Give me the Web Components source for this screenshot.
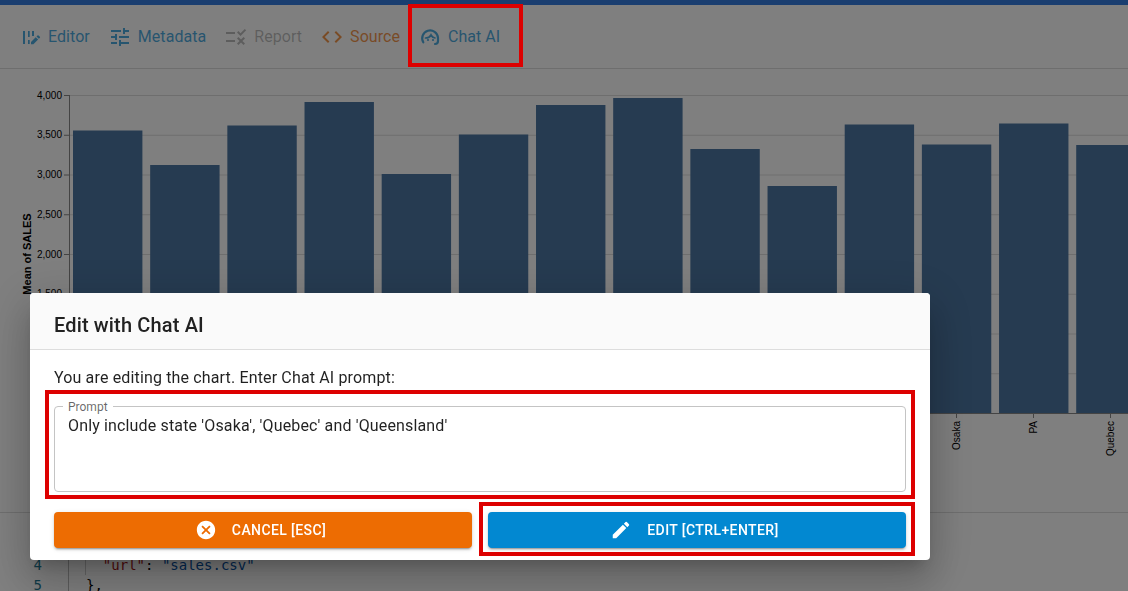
<!DOCTYPE html>
<html lang="en">
<head>
<meta charset="utf-8">
<title>Edit with Chat AI</title>
<style>
  html, body { margin: 0; height: 100%; overflow: hidden; }
  body { font-family: Roboto, "Liberation Sans", sans-serif; background: #fff; }
</style>
</head>
<body>
<mi-app>
  <mi-pestanas>
    <mi-pestana icono="editor" color="#0288d1">Editor</mi-pestana>
    <mi-pestana icono="tune" color="#0288d1">Metadata</mi-pestana>
    <mi-pestana icono="rule" color="rgba(0,0,0,.38)">Report</mi-pestana>
    <mi-pestana icono="code" color="#ef6c00">Source</mi-pestana>
    <mi-pestana icono="chat" color="#0288d1">Chat AI</mi-pestana>
  </mi-pestanas>
  <mi-grafico></mi-grafico>
  <mi-codigo></mi-codigo>
</mi-app>

<mi-fondo>
  <mi-dialogo titulo="Edit with Chat AI">
    You are editing the chart. Enter Chat AI prompt:
    <mi-campo slot="campo" etiqueta="Prompt">Only include state 'Osaka', 'Quebec' and 'Queensland'</mi-campo>
    <mi-boton slot="acciones" icono="cancel" color="#ed6c02">CANCEL [ESC]</mi-boton>
    <mi-boton slot="acciones" icono="edit" color="#0288d1">EDIT [CTRL+ENTER]</mi-boton>
  </mi-dialogo>
</mi-fondo>

<!-- Recuadros rojos de anotación, encima de todo -->
<mi-recuadro x="408" y="4" ancho="115" alto="63"></mi-recuadro>
<mi-recuadro x="45" y="390" ancho="870" alto="109"></mi-recuadro>
<mi-recuadro x="479" y="502" ancho="436" alto="54"></mi-recuadro>

<script>
// Iconos compartidos
const ICONOS = {
  tune: '<path fill="currentColor" d="M3 17v2h6v-2H3zM3 5v2h10V5H3zm10 16v-2h8v-2h-8v-2h-2v6h2zM7 9v2H3v2h4v2h2V9H7zm14 4v-2H11v2h10zm-6-4h2V7h4V5h-4V3h-2v6z"/>',
  rule: '<path fill="currentColor" d="M16.54 11 13 7.46l1.41-1.41 2.12 2.12 4.24-4.24 1.41 1.41L16.54 11zM11 7H2v2h9V7zm10 6.41L19.59 12 17 14.59 14.41 12 13 13.41 15.59 16 13 18.59 14.41 20 17 17.41 19.59 20 21 18.59 18.41 16 21 13.41zM11 15H2v2h9v-2z"/>',
  code: '<path fill="currentColor" d="M9.4 16.6 4.8 12l4.6-4.6L8 6l-6 6 6 6 1.4-1.4zm5.2 0 4.6-4.6-4.6-4.6L16 6l6 6-6 6-1.4-1.400z"/>',
  cancel: '<path fill="currentColor" d="M12 2C6.47 2 2 6.47 2 12s4.47 10 10 10 10-4.47 10-10S17.53 2 12 2zm5 13.59L15.59 17 12 13.41 8.41 17 7 15.59 10.59 12 7 8.41 8.41 7 12 10.59 15.59 7 17 8.41 13.41 12 17 15.59z"/>',
  edit: '<path fill="currentColor" d="M3 17.25V21h3.75L17.81 9.94l-3.75-3.75L3 17.25zM20.71 7.04c.39-.39.39-1.02 0-1.41l-2.34-2.34a.9959.9959 0 0 0-1.41 0l-1.83 1.83 3.75 3.75 1.83-1.83z"/>',
  editor: '<path fill="currentColor" d="M5 6h2v13H5zM10 6h1.700v6H10zm0 9h1.700v4H10zM14 6h2v5h-2z"/><path fill="currentColor" d="M13 19.300v-2.400l4.700-4.700 2.400 2.400-4.700 4.700zM18.500 11.400l1-1a.7.7 0 0 1 1 0l1.400 1.400a.7.7 0 0 1 0 1l-1 1z"/>',
  chat: '<g fill="none" stroke="currentColor" stroke-width="2.200" stroke-linecap="round"><path d="M5.300 17.300A7.900 7.900 0 1 1 20 12.800V16c0 2-1 3-3 3"/><path stroke-width="1.700" d="M7.500 13c2.500 0 4.500-1 5.500-3 .8 1.600 2 2.800 4 3"/></g><circle cx="10" cy="15" r="1.100" fill="currentColor"/><circle cx="15" cy="15" r="1.100" fill="currentColor"/>'
};

class MiApp extends HTMLElement {
  constructor() {
    super();
    this.attachShadow({ mode: 'open' });
    this.shadowRoot.innerHTML = `
      <style>
        :host { display: flex; flex-direction: column; height: 591px; border-top: 5px solid #347ce0; box-sizing: border-box; overflow: hidden; }
      </style>
      <slot></slot>
    `;
  }
}

class MiPestanas extends HTMLElement {
  constructor() {
    super();
    this.attachShadow({ mode: 'open' });
    this.shadowRoot.innerHTML = `
      <style>
        :host { display: flex; align-items: center; height: 63px; padding: 0 9px; border-bottom: 1px solid #ddd; flex: none; }
      </style>
      <slot></slot>
    `;
  }
}

class MiPestana extends HTMLElement {
  constructor() {
    super();
    this.attachShadow({ mode: 'open' });
  }

  connectedCallback() {
    this.shadowRoot.innerHTML = `
      <style>
        :host { display: flex; align-items: center; gap: 6px; padding: 0 9px; font: 400 16px Roboto, sans-serif; letter-spacing: .05px; opacity: .7; color: ${this.getAttribute('color')}; }
        svg { width: 24px; height: 24px; flex: none; }
      </style>
      <svg viewBox="0 0 24 24">${ICONOS[this.getAttribute('icono')]}</svg>
      <slot></slot>
    `;
  }
}

class MiGrafico extends HTMLElement {
  constructor() {
    super();
    this.attachShadow({ mode: 'open' });
    // Parte superior de cada barra, en píxeles de la página
    this.barras = [130.5, 165, 125.5, 102, 174, 134.5, 105, 98, 149, 186, 124.5, 144.5, 123.5, 145];
  }

  connectedCallback() {
    const dy = -69; // el svg empieza debajo de las pestañas
    let sHTML = '';
    for (let i = 0; i < 9; i++) {
      const y = 95.5 + i * 39.75 + dy;
      sHTML += `<line x1="69" x2="1128" y1="${y}" y2="${y}" stroke="#ddd"/>`;
      sHTML += `<line x1="64" x2="69" y1="${y}" y2="${y}" stroke="#888"/>`;
    }
    ['4,000', '3,500', '3,000', '2,500', '2,000', '1,500'].forEach((t, i) => {
      sHTML += `<text x="62" y="${95.5 + i * 39.75 + 3 + dy}" text-anchor="end" font-size="10">${t}</text>`;
    });
    this.barras.forEach((top, i) => {
      const x = 73 + i * 77.17;
      sHTML += `<rect x="${x}" y="${top + dy}" width="69.4" height="${413 - top}" fill="#4c76a2"/>`;
    });
    sHTML += `<line x1="69.5" x2="69.5" y1="${95 + dy}" y2="${413 + dy}" stroke="#888"/>`;
    sHTML += `<line x1="69" x2="1128" y1="${413.5 + dy}" y2="${413.5 + dy}" stroke="#888"/>`;
    [['Osaka', 956], ['PA', 1033], ['Quebec', 1110]].forEach(([t, x]) => {
      sHTML += `<line x1="${x + .5}" x2="${x + .5}" y1="${413 + dy}" y2="${418 + dy}" stroke="#888"/>`;
      sHTML += `<text transform="translate(${x + 4} ${421 + dy}) rotate(-90)" text-anchor="end" font-size="10">${t}</text>`;
    });
    sHTML += `<text transform="translate(31 ${254 + dy}) rotate(-90)" text-anchor="middle" font-size="11" font-weight="700">Mean of SALES</text>`;
    this.shadowRoot.innerHTML = `
      <style>
        :host { display: block; flex: 1; min-height: 0; overflow: hidden; }
        svg { display: block; font-family: "Liberation Sans", Arial, sans-serif; fill: #000; }
      </style>
      <svg width="1128" height="444" viewBox="0 0 1128 444">${sHTML}</svg>
    `;
  }
}

class MiCodigo extends HTMLElement {
  constructor() {
    super();
    this.attachShadow({ mode: 'open' });
    this.shadowRoot.innerHTML = `
      <style>
        :host { display: grid; grid-template-columns: 69px 1fr; height: 79px; flex: none; box-sizing: border-box; border-top: 1px solid #ddd; padding-top: 2px; font: 14px/20px "DejaVu Sans Mono", monospace; overflow: hidden; }
        .numeros { text-align: right; padding-right: 26px; color: #237893; border-right: 1px solid #bbb; }
        .lineas { padding-left: 17px; color: #000; }
        .lineas div { height: 20px; white-space: pre; }
        .lineas .guia { border-left: 1px solid #ccc; margin-left: -1px; }
        .clave { color: #a31515; }
        .valor { color: #0451a5; }
      </style>
      <div class="numeros"><div>2</div><div>3</div><div>4</div><div>5</div></div>
      <div class="lineas">
        <div></div>
        <div></div>
        <div class="guia">  <span class="clave">"url"</span>: <span class="valor">"sales.csv"</span></div>
        <div>},</div>
      </div>
    `;
  }
}

// Capa oscura que cubre la página y coloca el diálogo
class MiFondo extends HTMLElement {
  constructor() {
    super();
    this.attachShadow({ mode: 'open' });
    this.shadowRoot.innerHTML = `
      <style>
        :host { position: fixed; inset: 0; background: rgba(0,0,0,.5); display: flex; align-items: flex-start; padding: 293px 0 0 30px; box-sizing: border-box; }
      </style>
      <slot></slot>
    `;
  }
}

class MiDialogo extends HTMLElement {
  constructor() {
    super();
    this.attachShadow({ mode: 'open' });
  }

  connectedCallback() {
    this.shadowRoot.innerHTML = `
      <style>
        :host { display: flex; flex-direction: column; width: 900px; background: #fff; border-radius: 4px; overflow: hidden; color: rgba(0,0,0,.87);
          box-shadow: 0 11px 15px -7px rgba(0,0,0,.2), 0 24px 38px 3px rgba(0,0,0,.14), 0 9px 46px 8px rgba(0,0,0,.12); font: 400 16px/24px Roboto, sans-serif; letter-spacing: .15px; }
        header { height: 48px; padding: 8px 24px 0; display: flex; align-items: center; background: #fafafa; border-bottom: 1px solid #ddd; font-size: 20px; font-weight: 500; color: #212121; }
        .cuerpo { padding: 16px 24px 12px; display: flex; flex-direction: column; }
        .texto { height: 24px; margin-bottom: 16px; }
        .acciones { display: flex; gap: 16px; margin-top: 20px; }
      </style>
      <header>${this.getAttribute('titulo')}</header>
      <div class="cuerpo">
        <div class="texto"><slot></slot></div>
        <slot name="campo"></slot>
        <div class="acciones"><slot name="acciones"></slot></div>
      </div>
    `;
  }
}

class MiCampo extends HTMLElement {
  constructor() {
    super();
    this.attachShadow({ mode: 'open' });
  }

  connectedCallback() {
    this.shadowRoot.innerHTML = `
      <style>
        :host { display: block; position: relative; height: 86px; box-sizing: border-box; border: 1px solid #c4c4c4; border-radius: 4px; padding: 7px 13px; font: 400 16px/24px Roboto, sans-serif; letter-spacing: .15px; }
        label { position: absolute; left: 8px; top: -8px; padding: 0 5px; background: #fff; font-size: 12px; line-height: 16px; letter-spacing: 0; color: rgba(0,0,0,.6); }
      </style>
      <label>${this.getAttribute('etiqueta')}</label>
      <slot></slot>
    `;
  }
}

class MiBoton extends HTMLElement {
  constructor() {
    super();
    this.attachShadow({ mode: 'open' });
  }

  connectedCallback() {
    this.shadowRoot.innerHTML = `
      <style>
        :host { flex: 1; display: flex; align-items: center; justify-content: center; gap: 15px; height: 36px; padding-right: 6px; border-radius: 4px; color: #fff; background: ${this.getAttribute('color')};
          font: 500 14px Roboto, sans-serif; letter-spacing: .4px;
          box-shadow: 0 3px 1px -2px rgba(0,0,0,.2), 0 2px 2px 0 rgba(0,0,0,.14), 0 1px 5px 0 rgba(0,0,0,.12); }
        svg { width: 22px; height: 22px; flex: none; margin-left: 1px; }
      </style>
      <svg viewBox="0 0 24 24">${ICONOS[this.getAttribute('icono')]}</svg>
      <slot></slot>
    `;
  }
}

class MiRecuadro extends HTMLElement {
  constructor() {
    super();
    this.attachShadow({ mode: 'open' });
  }

  connectedCallback() {
    this.shadowRoot.innerHTML = `
      <style>
        :host { position: fixed; box-sizing: border-box; border: 4px solid #dd0000; pointer-events: none;
          left: ${this.getAttribute('x')}px; top: ${this.getAttribute('y')}px; width: ${this.getAttribute('ancho')}px; height: ${this.getAttribute('alto')}px; }
      </style>
    `;
  }
}

// Registrar los elementos
customElements.define('mi-app', MiApp);
customElements.define('mi-pestanas', MiPestanas);
customElements.define('mi-pestana', MiPestana);
customElements.define('mi-grafico', MiGrafico);
customElements.define('mi-codigo', MiCodigo);
customElements.define('mi-fondo', MiFondo);
customElements.define('mi-dialogo', MiDialogo);
customElements.define('mi-campo', MiCampo);
customElements.define('mi-boton', MiBoton);
customElements.define('mi-recuadro', MiRecuadro);
</script>
</body>
</html>
